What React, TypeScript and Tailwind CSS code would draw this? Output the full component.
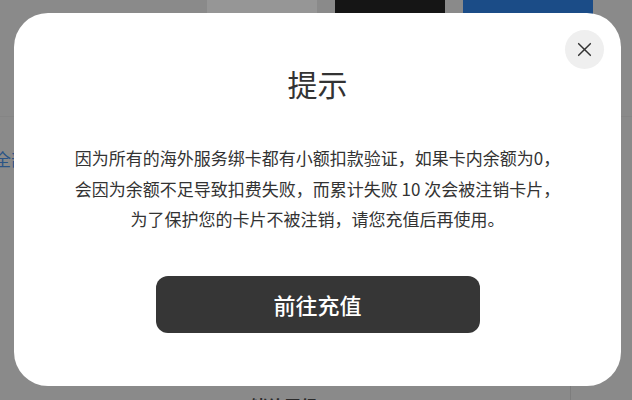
import React from 'react';

const font = { fontFamily: '"Noto Sans CJK SC", "Noto Sans", sans-serif' };

function CloseIcon() {
  return (
    <svg width="17" height="17" viewBox="0 0 16 16" fill="none" stroke="#333333" strokeWidth="1.4" strokeLinecap="round">
      <path d="M2.5 2.5 L13.5 13.5" />
      <path d="M13.5 2.5 L2.5 13.5" />
    </svg>
  );
}

export default function App() {
  return (
    <div
      className="relative h-[400px] w-[632px] overflow-hidden bg-[#8a8a8a]"
      style={font}
    >
      {/* dimmed page behind the dialog */}
      <div className="flex h-full flex-col">
        <div className="-mt-[20px] flex pl-[207px]">
          <div className="h-[48px] w-[110px] rounded-[14px] bg-[#969696]" />
          <div className="ml-[18px] h-[48px] w-[110px] rounded-[14px] bg-[#151515]" />
          <div className="ml-[18px] h-[48px] w-[130px] rounded-[14px] bg-[#1b4c87]" />
        </div>
        <div className="mt-[88px] h-px w-full bg-[#858585]" />
        <div className="-ml-[6px] mt-[30px] text-[17px] leading-[24px] text-[#2b5486]">全部</div>
        <div className="flex-1" />
        <div className="flex h-[8px] items-start">
          <div className="ml-[8px] mt-[6px] w-[50px] text-[16px] leading-[20px] text-[#2b5486]">支付</div>
          <div className="ml-[192px] mt-[4px] text-[17px] font-bold leading-[20px] text-[#2a2a2a]">储值层级</div>
          <div className="ml-[192px] mt-[6px] w-[60px] text-[16px] leading-[20px] text-[#3a3a3a]">金额</div>
          <div className="-mt-[10px] ml-[0px] h-[20px] w-px bg-[#7d7d7d]" />
        </div>
      </div>

      {/* dialog */}
      <div className="absolute left-[14px] top-[13px] flex h-[373px] w-[607px] flex-col items-center rounded-[34px] bg-white pt-[52px]">
        <button
          type="button"
          className="absolute right-[17px] top-[17px] flex h-[39px] w-[39px] items-center justify-center rounded-full bg-[#efefef]"
        >
          <CloseIcon />
        </button>

        <h2 className="text-[30px] font-normal leading-[36px] text-[#333333]">提示</h2>

        <p className="mt-[42px] text-center text-[17px] leading-[30.5px] text-[#333333]">
          因为所有的海外服务绑卡都有小额扣款验证，如果卡内余额为0，
          <br />
          会因为余额不足导致扣费失败，而累计失败 10 次会被注销卡片，
          <br />
          为了保护您的卡片不被注销，请您充值后再使用。
        </p>

        <button
          type="button"
          className="mt-[41px] h-[57px] w-[324px] rounded-[12px] bg-[#363636] text-[22px] font-medium text-white"
        >
          前往充值
        </button>
      </div>
    </div>
  );
}
